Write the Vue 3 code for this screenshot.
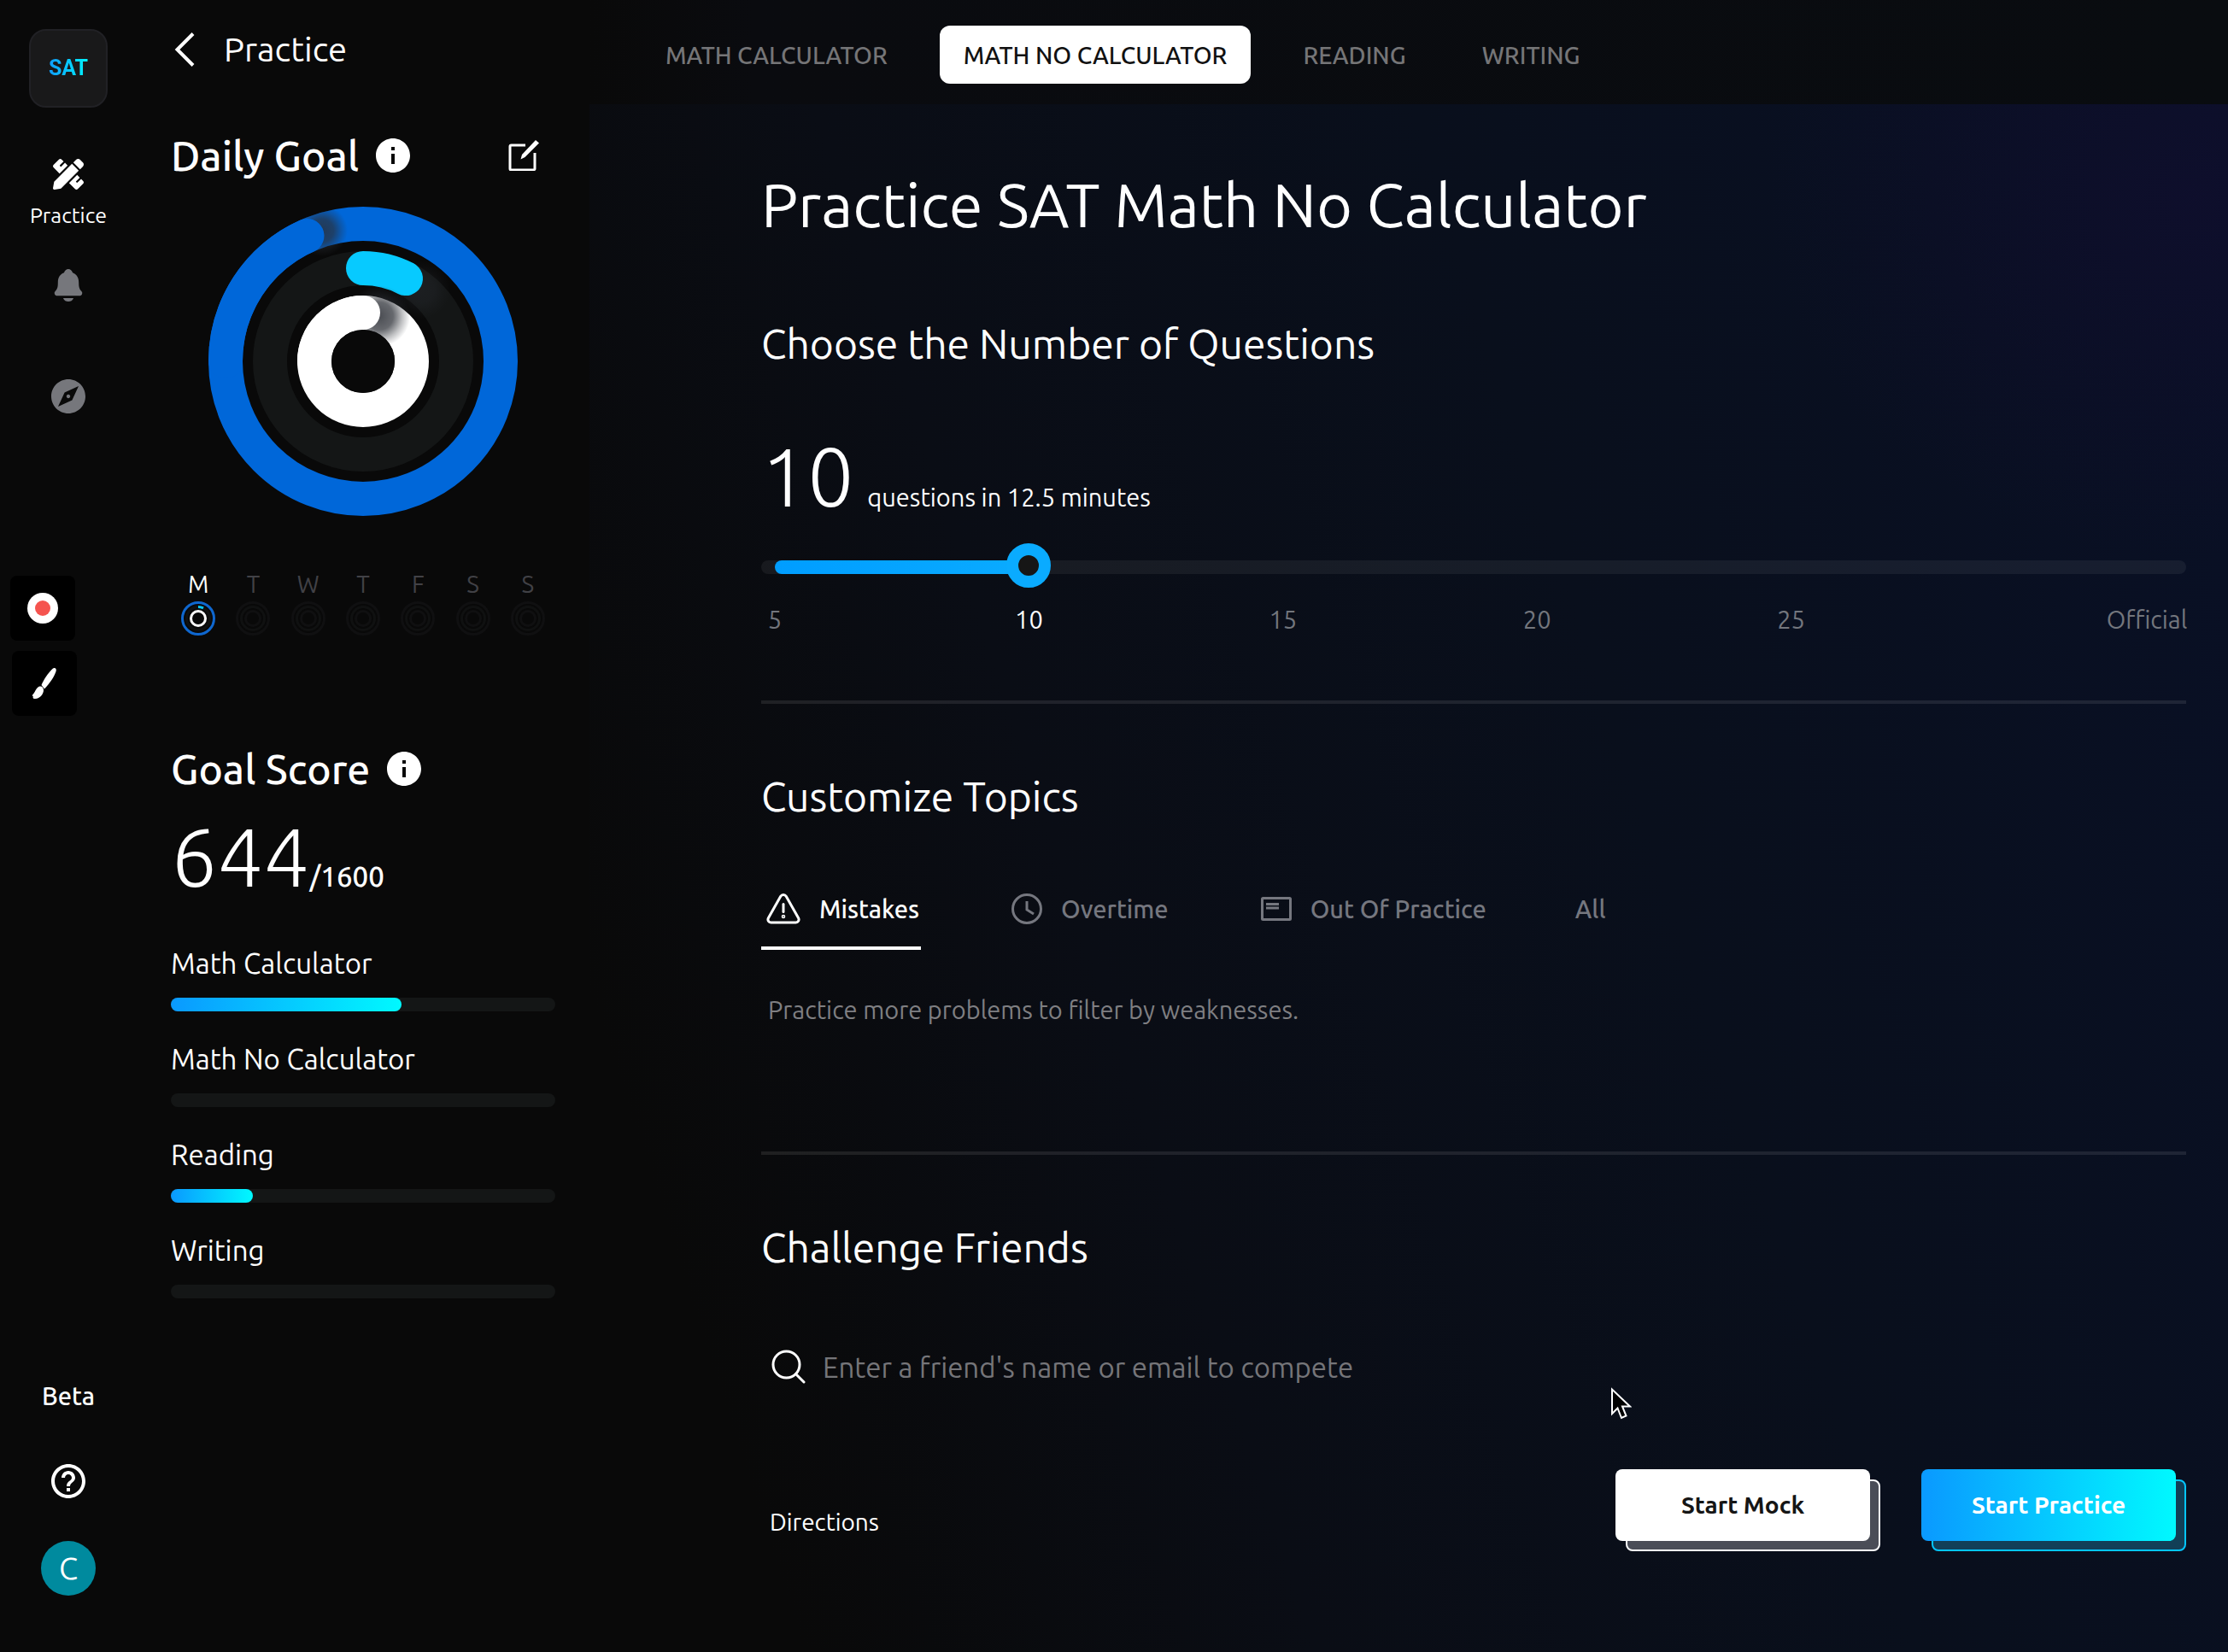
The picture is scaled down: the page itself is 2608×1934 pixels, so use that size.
<script setup>
import { computed, ref } from 'vue'

const days = ['M', 'T', 'W', 'T', 'F', 'S', 'S']
const scores = [
  { name: 'Math Calculator', value: 60 },
  { name: 'Math No Calculator', value: 0 },
  { name: 'Reading', value: 21.4 },
  { name: 'Writing', value: 0 },
]
const subjects = ['MATH CALCULATOR', 'MATH NO CALCULATOR', 'READING', 'WRITING']
const subject = ref('MATH NO CALCULATOR')

const OFFICIAL = 32
const marks = [
  { label: '5', value: 5, span: 5 },
  { label: '10', value: 10, span: 5 },
  { label: '15', value: 15, span: 5 },
  { label: '20', value: 20, span: 5 },
  { label: '25', value: 25, span: 7 },
  { label: 'Official', value: OFFICIAL, span: 0 },
]
const count = ref(10)
const fill = computed(() => ((count.value - 5) / (OFFICIAL - 5)) * 100)

const topic = ref('Mistakes')
const friend = ref('')
</script>

<template>
  <div class="app">
    <nav class="rail" aria-label="Main">
      <a class="logo" href="#"><span>SAT</span></a>
      <a class="rail-link active" href="#practice">
        <svg class="i36" viewBox="0 0 512 512" fill="currentColor" aria-hidden="true">
          <path d="M109.46 244.04l134.58-134.56-44.12-44.12-61.68 61.68a7.919 7.919 0 0 1-11.21 0l-11.21-11.21c-3.1-3.1-3.1-8.12 0-11.21l61.68-61.68-33.64-33.65C131.47-3.1 111.39-3.1 99 9.29L9.29 99c-12.38 12.39-12.39 32.47 0 44.86l100.17 100.18zm388.47-116.8c18.76-18.76 18.75-49.17 0-67.93l-45.25-45.25c-18.76-18.76-49.18-18.76-67.95 0l-46.02 46.01 113.2 113.2 46.02-46.03zM316.08 82.71l-297 296.96L.32 487.11c-2.53 14.49 10.09 27.11 24.59 24.56l107.45-18.84L429.28 195.9 316.08 82.71zm186.63 285.43l-33.64-33.64-61.68 61.68c-3.1 3.1-8.12 3.1-11.21 0l-11.21-11.21c-3.09-3.1-3.09-8.12 0-11.21l61.68-61.68-44.14-44.14L267.93 402.5l100.21 100.2c12.39 12.39 32.47 12.39 44.86 0l89.7-89.7c12.39-12.39 12.39-32.47.01-44.86z" />
        </svg>
        <span>Practice</span>
      </a>
      <a class="rail-link bell" href="#notifications" aria-label="Notifications">
        <svg class="i40" viewBox="20 20 472 472" fill="currentColor" aria-hidden="true">
          <path d="M440.08 341.31c-1.66-2-3.29-4-4.89-5.93-22-26.61-35.31-42.67-35.31-118 0-39-9.33-71-27.72-95-13.56-17.73-31.89-31.18-56.05-41.12a3 3 0 01-.82-.67C306.6 51.49 282.82 32 256 32s-50.59 19.49-59.28 48.56a3.13 3.13 0 01-.81.65c-56.38 23.21-83.78 67.74-83.78 136.14 0 75.36-13.29 91.42-35.31 118-1.6 1.93-3.23 3.89-4.89 5.93a35.16 35.16 0 00-4.65 37.62c6.17 13 19.32 21.07 34.33 21.07H410.5c14.94 0 28-8.06 34.19-21a35.17 35.17 0 00-4.61-37.66zM256 480a80.06 80.06 0 0070.44-42.13 4 4 0 00-3.54-5.87H189.12a4 4 0 00-3.55 5.87A80.06 80.06 0 00256 480z" />
        </svg>
      </a>
      <a class="rail-link compass" href="#explore" aria-label="Explore">
        <svg class="i40" viewBox="2 2 20 20" fill="currentColor" aria-hidden="true">
          <path d="M12 10.9c-.61 0-1.1.49-1.1 1.1s.49 1.1 1.1 1.1c.61 0 1.1-.49 1.1-1.1s-.49-1.1-1.1-1.1zM12 2C6.48 2 2 6.48 2 12s4.48 10 10 10 10-4.48 10-10S17.52 2 12 2zm2.19 12.19L6 18l3.81-8.19L18 6l-3.81 8.19z" />
        </svg>
      </a>
      <div class="rail-foot">
        <span class="beta">Beta</span>
        <a class="help" href="#help" aria-label="Help">
          <svg class="i40" viewBox="2 2 20 20" fill="currentColor" aria-hidden="true">
            <path d="M11 18h2v-2h-2v2zm1-16C6.48 2 2 6.48 2 12s4.48 10 10 10 10-4.48 10-10S17.52 2 12 2zm0 18c-4.41 0-8-3.59-8-8s3.59-8 8-8 8 3.59 8 8-3.59 8-8 8zm0-14c-2.21 0-4 1.79-4 4h2c0-1.1.9-2 2-2s2 .9 2 2c0 2-3 1.75-3 5h2c0-2.25 3-2.5 3-5 0-2.21-1.79-4-4-4z" />
          </svg>
        </a>
        <button class="avatar" type="button">C</button>
      </div>
    </nav>

    <aside class="panel">
      <header class="panel-head">
        <a class="back" href="#back" aria-label="Back">
          <svg width="24" height="40" viewBox="0 0 24 40" fill="none" stroke="currentColor" stroke-width="4" aria-hidden="true">
            <path d="M22 1.500L3.500 20L22 38.500" />
          </svg>
        </a>
        <span>Practice</span>
      </header>

      <section>
        <div class="panel-title">
          <h2>Daily Goal</h2>
          <svg class="i40" viewBox="2 2 20 20" fill="currentColor" aria-hidden="true">
            <path d="M12 2C6.480 2 2 6.480 2 12s4.480 10 10 10 10-4.480 10-10S17.520 2 12 2zm1 15h-2v-6h2v6zm0-8h-2V7h2v2z" />
          </svg>
          <button class="edit" type="button" aria-label="Edit daily goal">
            <svg class="i36" viewBox="0 0 36 36" fill="none" stroke="currentColor" aria-hidden="true">
              <path d="M20 6H3.500a1.500 1.500 0 0 0-1.500 1.500v26a1.500 1.500 0 0 0 1.500 1.500h26a1.500 1.500 0 0 0 1.500-1.500V15" stroke-width="3" />
              <path d="M32 0l4 3.500L19.500 20l-5 2.500 1.500-5.500z" fill="currentColor" stroke="none" />
            </svg>
          </button>
        </div>

        <svg class="rings" viewBox="0 0 362 362" aria-label="Daily progress" role="img">
          <defs>
            <radialGradient id="shade">
              <stop offset="0" stop-color="#2b2e35" stop-opacity="1" />
              <stop offset="0.450" stop-color="#2b2e35" stop-opacity="0.850" />
              <stop offset="0.750" stop-color="#2b2e35" stop-opacity="0.350" />
              <stop offset="1" stop-color="#2b2e35" stop-opacity="0" />
            </radialGradient>
            <clipPath id="outer-clip"><circle cx="181" cy="181" r="181" /></clipPath>
          </defs>
          <g fill="none" stroke-width="40">
            <circle cx="181" cy="181" r="161" stroke="#0067d9" />
            <circle cx="181" cy="181" r="109" stroke="#141616" />
            <circle cx="181" cy="181" r="57" stroke="#fff" />
          </g>
          <g clip-path="url(#outer-clip)">
            <circle cx="133" cy="28" r="30" fill="url(#shade)" opacity="0.800" />
          </g>
          <path d="M20 181A161 161 0 0 1 115.500 33.900" fill="none" stroke="#0067d9" stroke-width="40" stroke-linecap="round" />
          <circle cx="249" cy="97" r="34" fill="url(#shade)" opacity="0.350" />
          <path d="M181 72A109 109 0 0 1 231 84.100" fill="none" stroke="#07caff" stroke-width="40" stroke-linecap="round" />
          <circle cx="200" cy="128" r="36" fill="url(#shade)" opacity="0.850" />
          <path d="M124 181A57 57 0 0 1 181 124" fill="none" stroke="#fff" stroke-width="40" stroke-linecap="round" />
          <circle cx="181" cy="181" r="37" fill="#090909" />
        </svg>

        <ul class="days">
          <li v-for="(day, i) in days" :key="i" :class="{ today: i === 0 }">
            <span>{{ day }}</span>
            <svg class="i40" viewBox="0 0 40 40" fill="none" stroke-width="3" aria-hidden="true">
              <circle cx="20" cy="20" r="18.500" :stroke="i === 0 ? '#0f67cf' : '#101011'" />
              <circle cx="20" cy="20" r="13.500" stroke="#101111" />
              <circle cx="20" cy="20" r="8.500" :stroke="i === 0 ? '#fff' : '#101011'" />
              <path v-if="i === 0" d="M20 6.500A13.500 13.500 0 0 1 26 7.900" stroke="#07caff" />
            </svg>
          </li>
        </ul>
      </section>

      <section class="goal">
        <div class="panel-title">
          <h2>Goal Score</h2>
          <svg class="i40" viewBox="2 2 20 20" fill="currentColor" aria-hidden="true">
            <path d="M12 2C6.480 2 2 6.480 2 12s4.480 10 10 10 10-4.480 10-10S17.520 2 12 2zm1 15h-2v-6h2v6zm0-8h-2V7h2v2z" />
          </svg>
        </div>
        <p class="score"><span class="huge">644</span><span class="of">/1600</span></p>
        <ul class="scores">
          <li v-for="s in scores" :key="s.name">
            <span>{{ s.name }}</span>
            <div class="meter"><div class="meter-fill" :style="{ width: s.value + '%' }"></div></div>
          </li>
        </ul>
      </section>
    </aside>

    <div class="content">
      <nav class="subjects" aria-label="Subjects">
        <button v-for="s in subjects" :key="s" type="button" :class="{ on: s === subject }" @click="subject = s">{{ s }}</button>
      </nav>

      <main class="main">
        <h1>Practice SAT Math No Calculator</h1>

        <section>
          <h2 id="count-title" class="h-count">Choose the Number of Questions</h2>
          <p class="count"><span class="huge">{{ count }}</span><span>questions in {{ count * 1.25 }} minutes</span></p>
          <div class="slider">
            <div class="track"></div>
            <div class="track-inner"><div class="track-fill" :style="{ width: fill + '%' }"></div></div>
            <input v-model.number="count" type="range" min="5" :max="OFFICIAL" aria-labelledby="count-title" />
          </div>
          <div class="marks">
            <div v-for="m in marks" :key="m.label" :style="{ flexGrow: m.span }">
              <span :class="{ on: m.value === count }">{{ m.label }}</span>
            </div>
          </div>
        </section>

        <hr />

        <section>
          <h2>Customize Topics</h2>
          <div class="topics">
            <button type="button" :class="{ on: topic === 'Mistakes' }" @click="topic = 'Mistakes'">
              <svg width="40" height="40" viewBox="0 0 40 40" fill="none" stroke="currentColor" stroke-width="3" stroke-linejoin="round" stroke-linecap="round" aria-hidden="true">
                <path d="M16.800 5.300a3.700 3.700 0 0 1 6.400 0L37.600 30.800a3.500 3.500 0 0 1-3 5.200H5.400a3.500 3.500 0 0 1-3-5.200z" />
                <path d="M20 14.500v9" />
                <circle cx="20" cy="29" r="0.800" />
              </svg>
              Mistakes
            </button>
            <button type="button" :class="{ on: topic === 'Overtime' }" @click="topic = 'Overtime'">
              <svg width="36" height="36" viewBox="0 0 36 36" fill="none" stroke="currentColor" stroke-width="3" aria-hidden="true">
                <circle cx="18" cy="18" r="16.500" />
                <path d="M18 9v10l8 5" />
              </svg>
              Overtime
            </button>
            <button type="button" :class="{ on: topic === 'Out Of Practice' }" @click="topic = 'Out Of Practice'">
              <svg width="36" height="36" viewBox="0 0 36 36" fill="none" stroke="currentColor" stroke-width="3" aria-hidden="true">
                <rect x="1.500" y="5.500" width="33" height="25" rx="1" />
                <path d="M6 12.500h15M6 17h15" />
              </svg>
              Out Of Practice
            </button>
            <button type="button" :class="{ on: topic === 'All' }" @click="topic = 'All'">All</button>
          </div>
          <p class="hint">Practice more problems to filter by weaknesses.</p>
        </section>

        <hr class="hr-low" />

        <section>
          <h2>Challenge Friends</h2>
          <label class="search">
            <svg class="i40" viewBox="0 0 40 40" fill="none" stroke="currentColor" stroke-width="3" stroke-linecap="round" aria-label="Find a friend" role="img">
              <circle cx="17.500" cy="17.500" r="15.500" />
              <path d="M28.500 28.500L38 38" />
            </svg>
            <input v-model="friend" type="text" placeholder="Enter a friend's name or email to compete" />
          </label>
        </section>

        <footer class="actions">
          <a class="directions" href="#directions">Directions</a>
          <button class="start mock" type="button"><span>Start Mock</span></button>
          <button class="start practice" type="button"><span>Start Practice</span></button>
        </footer>
      </main>
    </div>

    <div class="recorder">
      <button class="rec" type="button" aria-label="Record">
        <svg class="i36" viewBox="0 0 36 36" aria-hidden="true">
          <circle cx="18" cy="18" r="18" fill="#fff" />
          <circle cx="18" cy="18" r="9" fill="#f5544f" />
        </svg>
      </button>
      <button class="brush" type="button" aria-label="Draw">
        <svg class="i36" viewBox="0 0 36 36" fill="#fff" aria-hidden="true">
          <path d="M28 0.500c2.500-1.500 4.500 0.500 3.500 3.500-2 6-6.500 13-13.500 20.500l-3.500-4.500c3-7 8-14.500 13.500-19.500z" />
          <path d="M12.500 21.500c2.500-.500 4.500 1.500 4.500 4.500 0 5.500-5.500 10.500-11 10-1.500-.2-1.800-1.500-1-2.500-1.500-.3-1.500-2 0-3 2.500-3 3.500-8 7.500-9z" />
        </svg>
      </button>
    </div>

    <svg class="cursor" width="24" height="38" viewBox="0 0 24 38" fill="#000" stroke="#fff" stroke-width="2" aria-hidden="true">
      <path d="M1 2.500V31l6.500-6.500L12 36l5.500-2.500L13 22.500h9z" />
    </svg>
  </div>
</template>

<style>
body {
  background: #090909;
}
</style>

<style scoped>
.app {
  position: relative;
  display: grid;
  grid-template-columns: 160px 530px minmax(0, 1fr);
  min-height: 100vh;
  color: #fff;
  background: #090909;
  font-family: Ubuntu, "Noto Sans", "Open Sans", sans-serif;
  font-size: 29px;
  line-height: 40px;
}
h1, h2, p, ul {
  margin: 0;
  padding: 0;
  list-style: none;
}
a {
  color: inherit;
  text-decoration: none;
}
button {
  padding: 0;
  border: 0;
  background: none;
  color: inherit;
  font: inherit;
  cursor: pointer;
}
svg {
  display: block;
  flex: none;
}
h2 {
  font-size: 48px;
  line-height: 56px;
  font-weight: 400;
}
.i36 {
  width: 36px;
  height: 36px;
}
.i40 {
  width: 40px;
  height: 40px;
}
.huge {
  font-size: 96px;
  line-height: 100px;
  font-weight: 300;
}

.rail {
  display: flex;
  flex-direction: column;
  align-items: center;
  padding: 34px 0 66px;
}
.logo {
  display: flex;
  align-items: center;
  justify-content: center;
  box-sizing: border-box;
  width: 92px;
  height: 92px;
  border: 2px solid #212125;
  border-radius: 20px;
  background: #19191a;
  font-family: Roboto, "Liberation Sans", sans-serif;
  font-size: 25px;
  font-weight: 700;
}
.logo span {
  background: linear-gradient(90deg, #0f9dff, #00f4ff);
  background-clip: text;
  color: transparent;
}
.rail-link {
  display: flex;
  flex-direction: column;
  align-items: center;
  color: #76777c;
}
.rail-link.active {
  gap: 14px;
  margin-top: 60px;
  color: #fff;
  font-size: 25px;
  line-height: 32px;
}
.bell {
  margin-top: 46px;
}
.compass {
  margin-top: 90px;
}
.rail-foot {
  display: flex;
  flex-direction: column;
  align-items: center;
  margin-top: auto;
}
.beta {
  font-weight: 500;
}
.help {
  margin: 60px 0 50px;
}
.avatar {
  width: 64px;
  height: 64px;
  border-radius: 50%;
  background: #008a9e;
  font-size: 36px;
}

.panel {
  padding: 0 40px;
}
.panel-head {
  display: flex;
  align-items: center;
  gap: 34px;
  height: 48px;
  padding: 34px 0 40px 4px;
  font-size: 40px;
  line-height: 48px;
}
.panel-title {
  display: flex;
  align-items: center;
  gap: 20px;
}
.panel-title h2 {
  font-weight: 500;
}
.panel section:first-of-type {
  padding-top: 32px;
}
.edit {
  margin: 0 19px 0 auto;
}
.rings {
  width: 362px;
  height: 362px;
  margin: 32px auto 64px;
}
.days {
  display: grid;
  grid-template-columns: repeat(7, 1fr);
  justify-items: center;
}
.days li {
  display: flex;
  flex-direction: column;
  align-items: center;
  gap: 4px;
  color: #414146;
  font-size: 28px;
  line-height: 32px;
}
.days .today {
  color: #fff;
}
.goal {
  margin-top: 128px;
}
.score {
  display: flex;
  align-items: baseline;
  margin: 25px 0 55px;
}
.of {
  font-size: 33px;
  font-weight: 500;
}
.scores {
  display: grid;
  gap: 36px;
  font-size: 33px;
}
.meter {
  height: 16px;
  margin-top: 20px;
  border-radius: 8px;
  background: #141616;
}
.meter-fill {
  height: 100%;
  border-radius: 8px;
  background: linear-gradient(90deg, #0a99ff, #00f9ff);
}

.content {
  display: flex;
  flex-direction: column;
}
.subjects {
  display: flex;
  align-items: center;
  gap: 33px;
  box-sizing: border-box;
  height: 122px;
  padding: 6px 0 0 61px;
  background: linear-gradient(90deg, #090909, #0a0b0f 10%, #090c10);
}
.subjects button {
  height: 68px;
  padding: 2px 28px 0;
  border-radius: 12px;
  color: #757577;
  font-size: 28px;
  font-weight: 500;
}
.subjects .on {
  background: #fff;
  color: #111;
}
.main {
  flex: 1;
  padding: 78px 49px 0 201px;
  background:
    radial-gradient(ellipse 500px 420px at 98% 6%, rgba(24, 12, 56, 0.35), transparent),
    linear-gradient(72deg, #090909 10%, #0a0d15 34%, #090f1c 62%, #091026 100%);
}
h1 {
  font-size: 72px;
  line-height: 80px;
  font-weight: 400;
}
.h-count {
  margin-top: 94px;
}
.count {
  display: flex;
  align-items: baseline;
  gap: 16px;
  margin: 78px 0 28px;
}
.slider {
  display: grid;
  align-items: center;
  height: 52px;
}
.slider > * {
  grid-area: 1 / 1;
}
.track {
  height: 16px;
  margin-top: 4px;
  border-radius: 8px;
  background: rgba(255, 255, 255, 0.06);
}
.track-inner {
  margin: 4px 46px 0 16px;
}
.track-fill {
  height: 16px;
  border-radius: 8px;
  background: linear-gradient(90deg, #009dff, #0aabff);
}
.slider input {
  width: calc(100% - 10px);
  height: 52px;
  margin: 0 0 0 -10px;
  appearance: none;
  background: none;
}
.slider input::-webkit-slider-thumb {
  appearance: none;
  box-sizing: border-box;
  width: 52px;
  height: 52px;
  border: 14px solid #0aabff;
  border-radius: 50%;
  background: #161616;
}
.marks {
  display: flex;
  margin: 17px 46px 0 16px;
  color: #73767d;
}
.marks div {
  flex: 0 1 0;
  width: 0;
  white-space: nowrap;
}
.marks span {
  display: inline-block;
  transform: translateX(-50%);
}
.marks .on {
  color: #fff;
}
hr {
  height: 4px;
  margin: 75px 0 80px;
  border: 0;
  background: rgba(255, 255, 255, 0.09);
}
.hr-low {
  margin-top: 146px;
}
.topics {
  display: flex;
  gap: 100px;
  margin-top: 84px;
  color: #75777f;
  font-weight: 500;
}
.topics button {
  display: flex;
  align-items: center;
  gap: 22px;
  padding: 0 2px 24px;
  border-bottom: 4px solid transparent;
}
.topics button svg {
  margin-left: 4px;
}
.topics .on {
  border-color: #fff;
  color: #fff;
}
.hint {
  margin-top: 50px;
  padding-left: 8px;
  color: #7f7f82;
}
.search {
  display: flex;
  align-items: center;
  gap: 20px;
  height: 48px;
  margin-top: 88px;
  padding-left: 12px;
}
.search input {
  flex: 1;
  height: 48px;
  padding: 0;
  border: 0;
  outline: 0;
  background: none;
  color: #fff;
  font: inherit;
  font-size: 33px;
}
.search input::placeholder {
  color: #757579;
  opacity: 1;
}
.actions {
  display: flex;
  align-items: flex-end;
  gap: 48px;
  margin-top: 96px;
  font-size: 28px;
}
.directions {
  margin: 0 auto 14px 10px;
}
.start {
  padding: 0 12px 12px 0;
  font-weight: 700;
  position: relative;
}
.start::before {
  content: "";
  position: absolute;
  inset: 12px 0 0 12px;
  border: 2px solid #fff;
  border-radius: 8px;
  background: #4a4d57;
}
.start span {
  position: relative;
  display: block;
  width: 298px;
  border-radius: 8px;
  background: #fff;
  color: #151515;
  line-height: 84px;
}
.start.practice::before {
  border-color: #05c6ff;
  background: #123f57;
}
.start.practice span {
  background: linear-gradient(90deg, #0a99ff, #00f9ff);
  color: #fff;
}

.recorder {
  position: absolute;
  top: 674px;
  left: 12px;
  display: grid;
  gap: 12px;
}
.recorder button {
  display: grid;
  place-items: center;
  width: 76px;
  height: 76px;
  border-radius: 8px;
  background: #000;
}
.recorder .brush {
  margin-left: 2px;
}
.cursor {
  position: absolute;
  top: 1624px;
  left: 1886px;
}
</style>
